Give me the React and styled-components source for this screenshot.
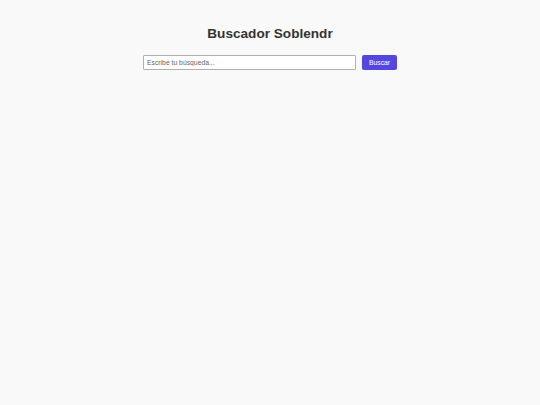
import React from "react";
import styled, {createGlobalStyle} from "styled-components";

const GlobalStyle = createGlobalStyle`
	html, body {
		margin: 0;
		padding: 0;
		background: #f9f9f9;
		font-family: "Liberation Sans", Arial, sans-serif;
	}
`;

const Page = styled.div`
	display: flex;
	flex-direction: column;
	align-items: center;
	min-height: 405px;
	padding-top: 26px;
	box-sizing: border-box;
`;

const Title = styled.h1`
	margin: 0 0 14px;
	font-size: 13.6px;
	font-weight: bold;
	color: #333;
`;

const SearchForm = styled.form`
	display: flex;
	align-items: center;
	gap: 6px;
	width: 254px;
`;

const SearchInput = styled.input`
	flex: 1;
	min-width: 0;
	height: 15px;
	box-sizing: border-box;
	padding: 0 3px;
	border: 1px solid #b0b0b0;
	border-radius: 1px;
	background: #fff;
	font-family: inherit;
	font-size: 6.8px;
	color: #333;
	outline: none;

	&::placeholder {
		color: #666;
	}
`;

const SearchButton = styled.button`
	flex: 0 0 35px;
	height: 15px;
	padding: 0;
	border: none;
	border-radius: 2px;
	background: #5646e0;
	color: #fff;
	font-family: inherit;
	font-size: 6.8px;
	cursor: pointer;
`;

function App() {
	return (
		<>
			<GlobalStyle />
			<Page>
				<Title>Buscador Soblendr</Title>
				<SearchForm onSubmit={e => e.preventDefault()}>
					<SearchInput placeholder="Escribe tu búsqueda..." />
					<SearchButton type="submit">Buscar</SearchButton>
				</SearchForm>
			</Page>
		</>
	);
}

export default App;
